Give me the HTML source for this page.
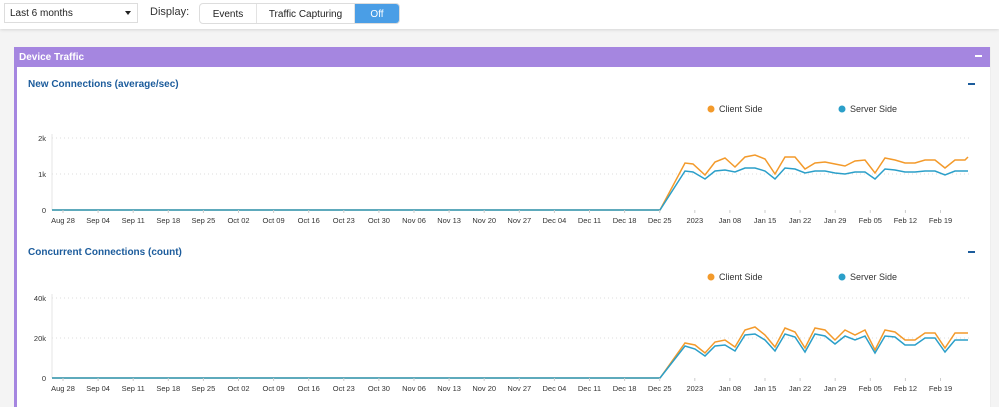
<!DOCTYPE html>
<html><head><style>
*{margin:0;padding:0;box-sizing:border-box}
body{width:999px;height:403px;background:#f4f4f4;font-family:"Liberation Sans",sans-serif;position:relative;overflow:hidden}
.top{position:absolute;left:0;top:0;width:999px;height:29px;background:#fff;box-shadow:0 1px 3px rgba(0,0,0,.12)}
.sel{position:absolute;left:4px;top:3px;width:134px;height:20px;border:1px solid #ddd;font-size:10px;padding:4px 0 0 5px;color:#222}
.sel:after{content:"";position:absolute;right:6px;top:7px;border:3px solid transparent;border-top:4px solid #222}
.disp{position:absolute;left:150px;top:6px;font-size:11px;color:#333}
.seg{position:absolute;left:199px;top:3px;height:21px;border:1px solid #ddd;border-radius:4px;display:flex;font-size:10px;color:#222;overflow:hidden}
.seg div{padding:5px 0 0;text-align:center;border-right:1px solid #e3e3e3}
.panel{position:absolute;left:14px;top:47px;width:977px;height:360px;background:#fff;border-left:3px solid #a586e0;border-right:1px solid #eee}
.ph{height:20px;background:#a586e0;color:#fff;font-weight:bold;font-size:10px;padding:5px 0 0 5px;margin-left:-3px;position:relative}
.min{position:absolute;width:7px;height:2px;background:#fff}
.t{position:absolute;left:28px;color:#1c5c9c;font-weight:bold;font-size:10px}
svg{position:absolute;left:0;top:0}
</style></head><body>
<div class="top">
<div class="sel">Last 6 months</div>
<div class="disp">Display:</div>
<div class="seg"><div style="width:57px">Events</div><div style="width:98px">Traffic Capturing</div><div style="width:44px;background:#4a9ee6;color:#fff;border:none">Off</div></div>
</div>
<div class="panel"><div class="ph">Device Traffic<div class="min" style="left:961px;top:8px"></div></div></div>
<div class="t" style="top:79px">New Connections (average/sec)</div>
<div class="t" style="top:247px">Concurrent Connections (count)</div>
<div style="position:absolute;left:968px;top:83px;width:7px;height:2px;background:#1c5c9c"></div>
<div style="position:absolute;left:968px;top:251px;width:7px;height:2px;background:#1c5c9c"></div>
<svg width="999" height="403" font-family="Liberation Sans,sans-serif" font-size="7.5" fill="#333">
<g id="c1">
<circle cx="711" cy="109" r="3.5" fill="#f39a2b"/><text x="719" y="112" font-size="9">Client Side</text>
<circle cx="842" cy="109" r="3.5" fill="#2b9fc9"/><text x="850" y="112" font-size="9">Server Side</text>
<line x1="52" y1="138" x2="970" y2="138" stroke="#ddd" stroke-dasharray="1,3"/>
<line x1="52" y1="174" x2="970" y2="174" stroke="#ddd" stroke-dasharray="1,3"/>
<line x1="52" y1="134" x2="52" y2="210" stroke="#e4e4e4"/>
<text x="46" y="141" text-anchor="end">2k</text><text x="46" y="177" text-anchor="end">1k</text><text x="46" y="213" text-anchor="end">0</text>
<polyline fill="none" stroke="#f39a2b" stroke-width="1.5" points="52,210 660,210 685,163 693,164 705,175 715,162 725,158 735,167 745,157 755,155 765,159 775,174 785,157 795,157 805,169 815,163 825,162 835,164 845,166 855,161 865,160 875,173 885,158 895,160 905,163 915,163 925,160 935,160 945,168 955,160 965,160 968,157"/>
<polyline fill="none" stroke="#2b9fc9" stroke-width="1.5" points="52,210 660,210 685,171 693,172 705,179 715,171 725,170 735,172 745,168 755,168 765,171 775,179 785,168 795,169 805,173 815,171 825,171 835,173 845,174 855,172 865,172 875,179 885,169 895,170 905,172 915,172 925,171 935,171 945,175 955,171 968,171"/>
</g>
<g>
<circle cx="711" cy="277" r="3.5" fill="#f39a2b"/><text x="719" y="280" font-size="9">Client Side</text>
<circle cx="842" cy="277" r="3.5" fill="#2b9fc9"/><text x="850" y="280" font-size="9">Server Side</text>
<line x1="52" y1="298" x2="970" y2="298" stroke="#ddd" stroke-dasharray="1,3"/>
<line x1="52" y1="338" x2="970" y2="338" stroke="#ddd" stroke-dasharray="1,3"/>
<line x1="52" y1="294" x2="52" y2="378" stroke="#e4e4e4"/>
<text x="46" y="301" text-anchor="end">40k</text><text x="46" y="341" text-anchor="end">20k</text><text x="46" y="381" text-anchor="end">0</text>
<polyline fill="none" stroke="#f39a2b" stroke-width="1.5" points="52,378 660,378 685,343 695,345 705,353 715,342 725,340 735,347 745,330 755,327 765,335 775,347 785,328 795,332 805,348 815,328 825,330 835,340 845,330 855,335 865,330 875,350 885,330 895,332 905,340 915,340 925,333 935,333 945,348 955,333 968,333"/>
<polyline fill="none" stroke="#2b9fc9" stroke-width="1.5" points="52,378 660,378 685,346 695,349 705,356 715,346 725,345 735,351 745,335 755,334 765,340 775,351 785,334 795,337 805,352 815,334 825,336 835,344 845,336 855,340 865,336 875,353 885,336 895,337 905,345 915,345 925,338 935,338 945,352 955,340 968,340"/>
</g>
<g id="lab"></g>
</svg>
<script>
var L=["Aug 28","Sep 04","Sep 11","Sep 18","Sep 25","Oct 02","Oct 09","Oct 16","Oct 23","Oct 30","Nov 06","Nov 13","Nov 20","Nov 27","Dec 04","Dec 11","Dec 18","Dec 25","2023","Jan 08","Jan 15","Jan 22","Jan 29","Feb 05","Feb 12","Feb 19"];
var g=document.getElementById("lab"),s="";
L.forEach(function(t,i){var x=63+i*35.1;[220,388].forEach(function(y){s+='<line x1="'+x+'" y1="'+(y-10)+'" x2="'+x+'" y2="'+(y-7)+'" stroke="#ccc"/><text x="'+x+'" y="'+(y+3)+'" text-anchor="middle">'+t+'</text>';});});
g.innerHTML=s;
</script>
</body></html>
